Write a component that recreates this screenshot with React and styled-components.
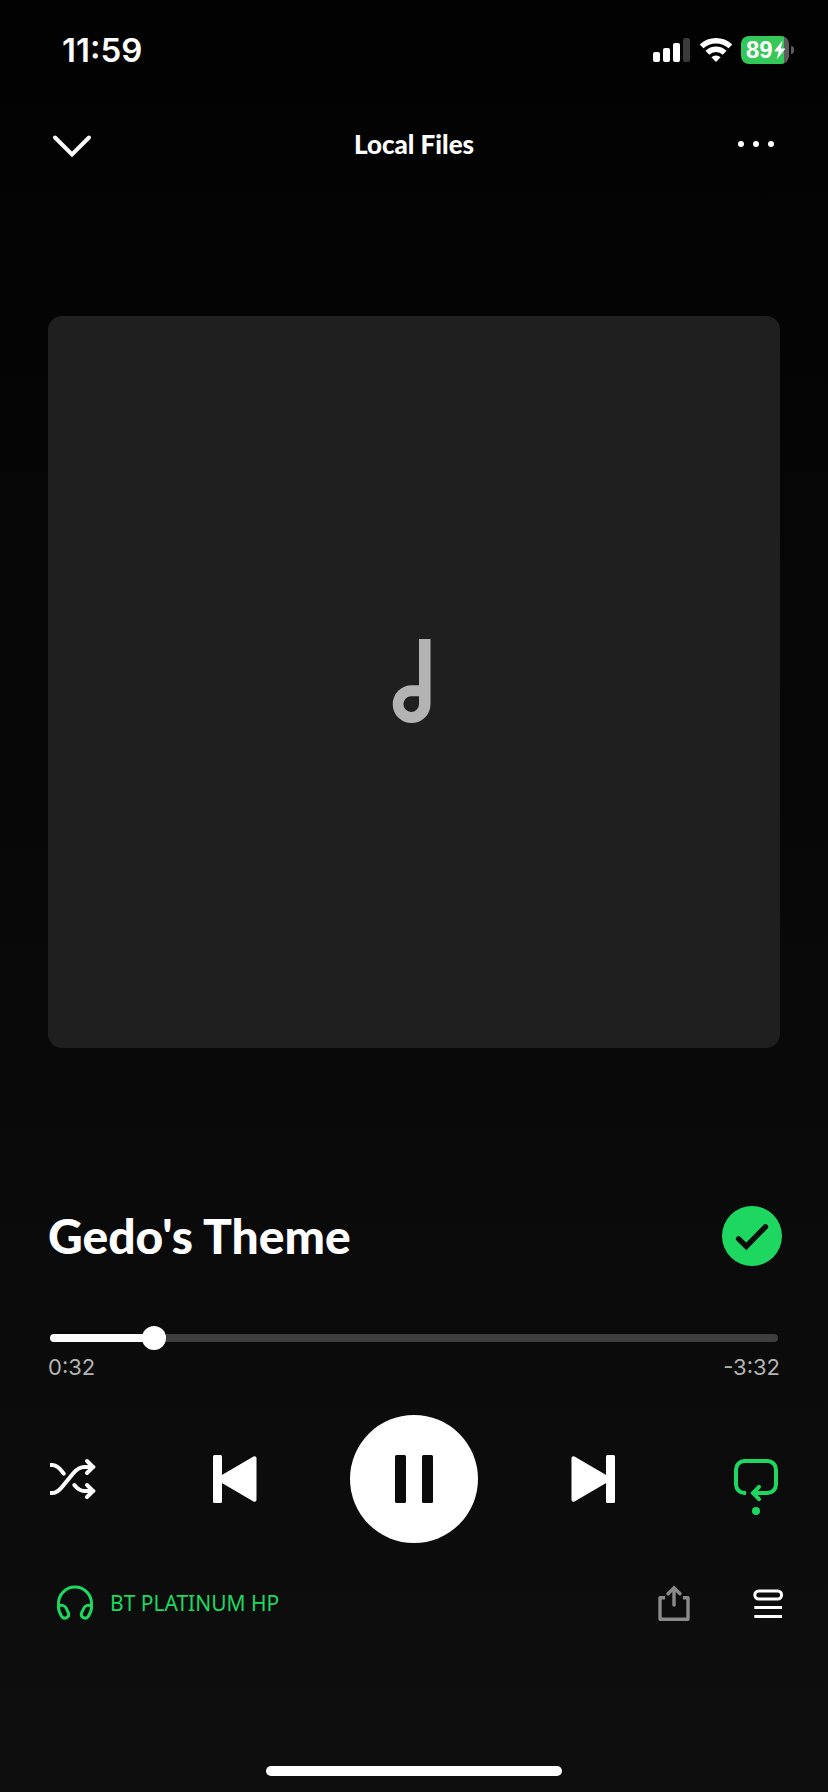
import { useState } from 'react';
import styled, { createGlobalStyle, ThemeProvider } from 'styled-components';

const theme = {
  green: '#1ed760',
  white: '#ffffff',
  grey: '#b3b3b3',
  dark: '#0b0b0b',
  heading: 'Lato, "Open Sans", sans-serif',
  sans: '"Noto Sans", "Open Sans", sans-serif',
  digits: 'Inter, "Liberation Sans", sans-serif',
};

const GlobalStyle = createGlobalStyle`
  *, *::before, *::after {
    box-sizing: border-box;
  }
  body {
    margin: 0;
    background: #0e0e0e;
  }
`;

const Screen = styled.div`
  display: flex;
  flex-direction: column;
  min-height: 100vh;
  background: linear-gradient(#020202, #080808 50%, #0e0e0e);
  color: ${props => props.theme.white};
  font-family: ${props => props.theme.sans};
`;

const StatusBar = styled.div`
  display: flex;
  align-items: center;
  justify-content: space-between;
  height: 100px;
  padding: 0 34px 0 62px;
`;

const Clock = styled.time`
  font: 600 33px/40px ${props => props.theme.digits};
`;

const StatusIcons = styled.div`
  display: flex;
  align-items: center;
  gap: 9px;
`;

const Battery = styled.div`
  display: flex;
  align-items: center;
  gap: 2px;
`;

const BatteryBody = styled.div`
  display: flex;
  align-items: center;
  gap: 1px;
  width: 48px;
  height: 28px;
  padding-left: 5px;
  border-radius: 8px;
  background: linear-gradient(to right, #34c759 ${props => props.$level}%, #5c5c5e ${props => props.$level}%);
  font: 700 24px/28px "Liberation Sans", sans-serif;
`;

const BatteryNub = styled.div`
  width: 3px;
  height: 8px;
  border-radius: 0 4px 4px 0;
  background: #5c5c5e;
`;

const Icon = styled.svg`
  display: block;
  flex: none;
  overflow: ${props => (props.$spill ? 'visible' : 'hidden')};
`;

const IconButton = styled.button`
  display: flex;
  align-items: center;
  justify-content: ${props => props.$align || 'center'};
  flex: none;
  width: ${props => props.$width || 48}px;
  height: 48px;
  padding: 0;
  border: 0;
  background: none;
  color: ${props => props.$color || props.theme.white};
  cursor: pointer;
`;

const Header = styled.header`
  display: flex;
  align-items: center;
  justify-content: space-between;
  margin-top: 20px;
  padding: 0 48px;
`;

const Source = styled.h1`
  margin: 0;
  font: 900 26px/36px ${props => props.theme.heading};
`;

const Artwork = styled.div`
  display: flex;
  align-items: center;
  justify-content: center;
  aspect-ratio: 1;
  margin: 148px 48px 0;
  border-radius: 14px;
  background: #1f1f1f;
  color: ${props => props.theme.grey};
`;

const TrackRow = styled.div`
  display: flex;
  align-items: center;
  justify-content: space-between;
  margin-top: 158px;
  padding: 0 46px 0 48px;
`;

const TrackTitle = styled.h2`
  margin: 0;
  font: 900 48px/60px ${props => props.theme.heading};
`;

const SavedButton = styled(IconButton)`
  width: 60px;
  height: 60px;
  border-radius: 50%;
  background: ${props => props.theme.green};
  color: ${props => props.theme.dark};
`;

const Progress = styled.div`
  margin-top: 60px;
  padding: 0 48px;
`;

const Seek = styled.input`
  display: block;
  appearance: none;
  width: calc(100% - 4px);
  height: 24px;
  margin: 0 2px;
  background: none;
  cursor: pointer;

  &::-webkit-slider-runnable-track {
    height: 8px;
    border-radius: 4px;
    background: linear-gradient(to right, #fff var(--played), #3e3e3e var(--played));
  }
  &::-webkit-slider-thumb {
    appearance: none;
    width: 24px;
    height: 24px;
    margin-top: -8px;
    border-radius: 50%;
    background: #fff;
  }
`;

const Times = styled.div`
  display: flex;
  justify-content: space-between;
  margin-top: 4px;
  color: ${props => props.theme.grey};
  font: 400 22px/26px ${props => props.theme.digits};
`;

const Controls = styled.div`
  display: flex;
  align-items: center;
  justify-content: space-between;
  margin-top: 35px;
  padding: 0 48px;
`;

const PlayButton = styled(IconButton)`
  width: 128px;
  height: 128px;
  border-radius: 50%;
  background: ${props => props.theme.white};
  color: ${props => props.theme.dark};
`;

const Footer = styled.footer`
  display: flex;
  align-items: center;
  justify-content: space-between;
  margin-top: 36px;
  padding: 0 40px 0 55px;
`;

const Device = styled.button`
  display: flex;
  align-items: center;
  gap: 15px;
  height: 48px;
  padding: 0;
  border: 0;
  background: none;
  color: ${props => props.theme.green};
  font: 400 21px/30px ${props => props.theme.sans};
  cursor: pointer;
`;

const FooterActions = styled.div`
  display: flex;
  gap: 54px;
`;

const HomeIndicator = styled.div`
  width: 296px;
  height: 10px;
  margin: auto auto 16px;
  border-radius: 5px;
  background: ${props => props.theme.white};
`;

const Signal = () => (
  <Icon width="38" height="24" viewBox="0 0 38 24" fill="#fff" aria-hidden="true">
    <rect x="0" y="14" width="7" height="10" rx="2" />
    <rect x="10" y="10" width="7" height="14" rx="2" />
    <rect x="20" y="5" width="7" height="19" rx="2" />
    <rect x="30" y="0" width="7" height="24" rx="2" fill="#3a3a3a" />
  </Icon>
);

const Wifi = () => (
  <Icon width="32" height="26" viewBox="0 0 32 26" fill="none" stroke="#fff" strokeWidth="5.4" aria-hidden="true">
    <path d="M1.6 9.4a21 21 0 0 1 28.8 0" />
    <path d="M7.3 15.7a12.6 12.6 0 0 1 17.4 0" />
    <path d="M11.4 20.2a6.8 6.8 0 0 1 9.2 0L16 25z" fill="#fff" stroke="none" />
  </Icon>
);

const Bolt = () => (
  <Icon width="12" height="20" viewBox="0 0 12 20" fill="#fff" aria-hidden="true">
    <path d="M8.6.5.6 10.6c-.3.4-.1.8.4.8h3.7l-2.1 8.1L11 9.3c.3-.4.1-.8-.4-.8H6.8z" />
  </Icon>
);

const Chevron = () => (
  <Icon width="48" height="48" viewBox="0 0 48 48" fill="none" stroke="currentColor" strokeWidth="4" strokeLinecap="round" aria-hidden="true">
    <path d="M7 17.5 24 34.5 41 17.5" />
  </Icon>
);

const Dots = () => (
  <Icon width="48" height="48" viewBox="0 0 48 48" fill="currentColor" aria-hidden="true">
    <circle cx="9" cy="24" r="3" />
    <circle cx="24" cy="24" r="3" />
    <circle cx="39" cy="24" r="3" />
  </Icon>
);

const Note = () => (
  <Icon width="48" height="88" viewBox="0 0 48 88" fill="currentColor" fillRule="evenodd" aria-hidden="true">
    <path d="M29 1h11.5v65.2a18.9 18.9 0 1 1-18.9-18.9H29zM29 58.3h-7.6a7.8 7.8 0 1 0 7.6 7.9z" />
  </Icon>
);

const Check = () => (
  <Icon width="60" height="60" viewBox="0 0 60 60" fill="none" stroke="currentColor" strokeWidth="5.4" strokeLinecap="round" aria-hidden="true">
    <path d="M16.6 32.8 24.3 40.5 43.4 20.8" />
  </Icon>
);

const Shuffle = () => (
  <Icon width="48" height="48" viewBox="0 0 48 48" fill="none" stroke="currentColor" strokeWidth="4" strokeLinecap="round" aria-hidden="true">
    <path d="M2 10h3M2 38h3" strokeLinecap="butt" />
    <path d="M4.5 10c5 .4 7.9 3.9 11.3 8.6" />
    <path d="M4.5 38c4.3-.3 6.8-2.7 9.5-6.1L25.5 18C28.5 14.5 31 12 36.5 12H45" />
    <path d="M26.3 30C29.5 34 32 36 36.5 36H45" />
    <path d="m39 6 6 6-6 6M39 30l6 6-6 6" />
  </Icon>
);

const Previous = () => (
  <Icon width="44" height="48" viewBox="0 0 44 48" fill="currentColor" aria-hidden="true">
    <rect width="9" height="48" rx="1.5" />
    <path d="M8 20.6 40.5 1.5a2 2 0 0 1 3 1.7v41.6a2 2 0 0 1-3 1.7L8 27.4z" />
  </Icon>
);

const Next = () => (
  <Icon width="44" height="48" viewBox="0 0 44 48" fill="currentColor" aria-hidden="true">
    <rect x="35" width="9" height="48" rx="1.5" />
    <path d="M36 20.6 3.5 1.5a2 2 0 0 0-3 1.7v41.6a2 2 0 0 0 3 1.7L36 27.4z" />
  </Icon>
);

const Pause = () => (
  <Icon width="38" height="48" viewBox="0 0 38 48" fill="currentColor" aria-hidden="true">
    <rect width="11" height="48" rx="1.5" />
    <rect x="27" width="11" height="48" rx="1.5" />
  </Icon>
);

const Play = () => (
  <Icon width="38" height="48" viewBox="0 0 38 48" fill="currentColor" aria-hidden="true">
    <path d="M3 1v46l35-23z" />
  </Icon>
);

// точка под стрелкой выходит за границы иконки
const Repeat = () => (
  <Icon $spill width="48" height="48" viewBox="0 0 48 48" fill="none" stroke="currentColor" strokeWidth="4" aria-hidden="true">
    <path d="M14 38h-1.5A8.5 8.5 0 0 1 4 29.5v-15A8.5 8.5 0 0 1 12.5 6h23a8.5 8.5 0 0 1 8.5 8.5v15a8.5 8.5 0 0 1-8.5 8.5H21" />
    <path d="m27 31.8-6 6.2 6 6.2" strokeLinecap="round" />
    <circle cx="24" cy="56" r="4" fill="currentColor" stroke="none" />
  </Icon>
);

const Headphones = () => (
  <Icon width="40" height="40" viewBox="0 0 40 40" fill="none" stroke="currentColor" strokeWidth="3" aria-hidden="true">
    <path d="M3.5 26v-5.5a16.5 16.5 0 0 1 33 0V26" />
    <path d="M3.5 24.5c0 3.5 1.2 5.7 3.2 8.9a3.8 3.8 0 0 0 6.7-3.5l-2.4-5c-1.4-2.8-5-3.3-7.5-1.8z" />
    <path d="M36.5 24.5c0 3.5-1.2 5.7-3.2 8.9a3.8 3.8 0 0 1-6.7-3.5l2.4-5c1.4-2.8 5-3.3 7.5-1.8z" />
  </Icon>
);

const Share = () => (
  <Icon width="40" height="48" viewBox="0 0 40 48" fill="none" stroke="currentColor" strokeWidth="3.4" aria-hidden="true">
    <path d="M11 18.7H6v21.6h28V18.7h-5" strokeLinejoin="round" />
    <path d="M20 9v17M14 14.8l6-6 6 6" strokeLinecap="round" />
  </Icon>
);

const Queue = () => (
  <Icon width="40" height="48" viewBox="0 0 40 48" fill="none" stroke="currentColor" strokeWidth="3" aria-hidden="true">
    <rect x="6.8" y="12" width="26.8" height="8" rx="4" />
    <path d="M6.3 28.4H34M6.3 37.6H34" />
  </Icon>
);

const DURATION = 244;

const formatTime = seconds => `${Math.floor(seconds / 60)}:${String(Math.floor(seconds % 60)).padStart(2, '0')}`;

const App = () => {
  const [elapsed, setElapsed] = useState(32);
  const [playing, setPlaying] = useState(true);

  return (
    <ThemeProvider theme={theme}>
      <GlobalStyle />
      <Screen>
        <StatusBar>
          <Clock>11:59</Clock>
          <StatusIcons>
            <Signal />
            <Wifi />
            <Battery>
              <BatteryBody $level={89}>
                89
                <Bolt />
              </BatteryBody>
              <BatteryNub />
            </Battery>
          </StatusIcons>
        </StatusBar>

        <Header>
          <IconButton aria-label="Close">
            <Chevron />
          </IconButton>
          <Source>Local Files</Source>
          <IconButton aria-label="More">
            <Dots />
          </IconButton>
        </Header>

        <Artwork>
          <Note />
        </Artwork>

        <TrackRow>
          <TrackTitle>Gedo's Theme</TrackTitle>
          <SavedButton aria-label="Saved">
            <Check />
          </SavedButton>
        </TrackRow>

        <Progress>
          <Seek
            type="range"
            aria-label="Seek"
            min="0"
            max={DURATION}
            value={elapsed}
            onChange={e => setElapsed(Number(e.target.value))}
            style={{ '--played': `${(elapsed / DURATION) * 100}%` }}
          />
          <Times>
            <span>{formatTime(elapsed)}</span>
            <span>-{formatTime(DURATION - elapsed)}</span>
          </Times>
        </Progress>

        <Controls>
          <IconButton $width={72} $align="flex-start" aria-label="Shuffle">
            <Shuffle />
          </IconButton>
          <IconButton $width={44} aria-label="Previous">
            <Previous />
          </IconButton>
          <PlayButton aria-label={playing ? 'Pause' : 'Play'} onClick={() => setPlaying(!playing)}>
            {playing ? <Pause /> : <Play />}
          </PlayButton>
          <IconButton $width={44} aria-label="Next">
            <Next />
          </IconButton>
          <IconButton $width={72} $align="flex-end" $color="#1ed760" aria-label="Repeat">
            <Repeat />
          </IconButton>
        </Controls>

        <Footer>
          <Device>
            <Headphones />
            BT PLATINUM HP
          </Device>
          <FooterActions>
            <IconButton $width={40} $color="#8a8a8a" aria-label="Share">
              <Share />
            </IconButton>
            <IconButton $width={40} aria-label="Queue">
              <Queue />
            </IconButton>
          </FooterActions>
        </Footer>

        <HomeIndicator />
      </Screen>
    </ThemeProvider>
  );
};

export default App;
